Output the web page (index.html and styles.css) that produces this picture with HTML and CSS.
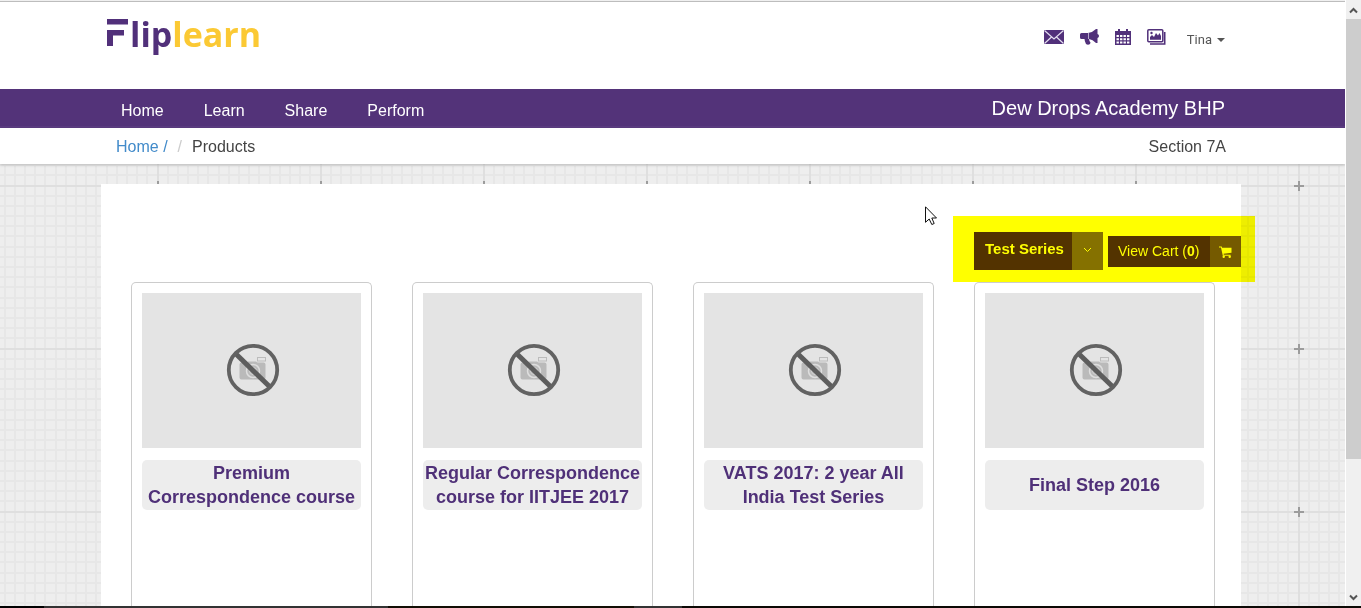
FILE: index.html
```html
<!DOCTYPE html>
<html lang="en">
<head>
<meta charset="utf-8">
<meta name="viewport" content="width=device-width, initial-scale=1">
<title>Fliplearn - Products</title>
<link rel="stylesheet" href="styles.css">
</head>
<body>
<svg class="defs" width="0" height="0" aria-hidden="true">
  <symbol id="no-photo" viewBox="0 0 54 54">
    <path fill="#bababa" d="M13.500 21.500q0-2 2-2h5l1.500-1h8l1.500 1h6q2 0 2 2v13q0 2-2 2h-22q-2 0-2-2z"/>
    <rect x="31.500" y="14.500" width="8" height="3.500" fill="none" stroke="#bcbcbc"/>
    <circle cx="27" cy="28" r="6.500" fill="#bababa" stroke="#dedede" stroke-width="1.500"/>
    <circle cx="27" cy="28" r="3.500" fill="none" stroke="#d2d2d2"/>
    <path d="M9.500 10.500 44 44" stroke="#5d5d5d" stroke-width="5"/>
    <circle cx="27" cy="27" r="24.200" fill="none" stroke="#626262" stroke-width="3.800"/>
  </symbol>
</svg>
<div class="window">
  <div class="page">
    <header class="header">
      <a class="logo" href="#" aria-label="Fliplearn">
        <svg class="logo-mark" viewBox="0 0 21 27" aria-hidden="true"><path fill="#51307a" d="M0 0h21v5.500H0zM0 11h17v5.500H6V27H0z"/></svg>
        <span class="logo-lip">lip</span><span class="logo-learn">learn</span>
      </a>
      <nav class="tools" aria-label="Account">
        <a href="#" aria-label="Messages"><svg width="20" height="18" viewBox="0 0 20 18"><path fill="#51307a" d="M0 2h20v14H0z"/><path d="M.5 2.500 10 11l9.500-8.500M.5 15.500 7.500 9M19.500 15.500 12.500 9" fill="none" stroke="#e4def0" stroke-width="1.200"/></svg></a>
        <a href="#" aria-label="Announcements"><svg width="19" height="18" viewBox="0 0 19 18"><path fill="#51307a" d="M0 6.500Q0 5 1.500 5H8q4.500-.5 8-4h1.500v5q1.500.3 1.500 2t-1.500 2v5H16q-3.300-3.500-7-4 .2 2 1.500 3.500L10 16q-2 1.300-4 0-1.500-3-1.500-5h-3Q0 11 0 9.500z"/><path d="M8.500 5v6" stroke="#b8a9cd"/></svg></a>
        <a href="#" aria-label="Calendar"><svg width="16" height="18" viewBox="0 0 16 18"><path fill="#51307a" d="M0 3h3V1h2v2h6V1h2v2h3v14H0z"/><g fill="#fff"><path d="M1.500 7h2.400v2H1.500zM5 7h2.400v2H5zM8.500 7h2.400v2H8.500zM12 7h2.400v2H12zM1.500 10.200h2.400v2H1.500zM5 10.200h2.400v2H5zM8.500 10.200h2.400v2H8.500zM12 10.200h2.400v2H12zM1.500 13.400h2.400v2H1.500zM5 13.400h2.400v2H5zM8.500 13.400h2.400v2H8.500zM12 13.400h2.400v2H12z"/></g></svg></a>
        <a href="#" aria-label="Gallery"><svg width="19" height="18" viewBox="0 0 19 18"><rect x=".8" y="1.800" width="15" height="12" rx="1" fill="#fff" stroke="#51307a" stroke-width="1.500"/><path fill="#51307a" d="M3 11.800V9l2-2 2 2 2-4 2 2.500L12.500 5 14 8v3.800z"/><circle cx="4.500" cy="5" r="1.200" fill="#51307a"/><path d="M17.700 4v12H3" fill="none" stroke="#51307a" stroke-width="1.600"/></svg></a>
        <button class="user" type="button">Tina<span class="caret"></span></button>
      </nav>
    </header>

    <div class="navbar">
      <nav class="menu" aria-label="Main">
        <a href="#">Home</a>
        <a href="#">Learn</a>
        <a href="#">Share</a>
        <a href="#">Perform</a>
      </nav>
      <span class="school">Dew Drops Academy BHP</span>
    </div>

    <div class="crumbs">
      <div class="trail"><a href="#">Home /</a><span class="slash">/</span><span>Products</span></div>
      <span>Section 7A</span>
    </div>

    <main class="workspace">
      <svg class="graph-paper" aria-hidden="true">
        <defs>
          <pattern id="graph" width="163" height="163" x="76" y="-60" patternUnits="userSpaceOnUse">
            <rect width="163" height="163" fill="#eeeeee"/>
            <path d="M10 0v163M20 0v163M31 0v163M41 0v163M51 0v163M61 0v163M71 0v163M92 0v163M102 0v163M112 0v163M122 0v163M132 0v163M143 0v163M153 0v163M163 0v163M0 0v163M0 0h163M0 10h163M0 20h163M0 31h163M0 41h163M0 51h163M0 61h163M0 71h163M0 92h163M0 102h163M0 112h163M0 122h163M0 132h163M0 143h163M0 153h163M0 163h163" stroke="#e7e7e7" stroke-width="2"/>
            <path d="M82 0v163M0 82h163" stroke="#dfdfdf" stroke-width="2"/>
            <path d="M82 77v10M77 82h10" stroke="#9c9c9c" stroke-width="2"/>
          </pattern>
        </defs>
        <rect width="100%" height="100%" fill="url(#graph)"/>
      </svg>
      <section class="panel">
        <div class="toolbar">
          <label class="filter">
            <select aria-label="Category"><option>Test Series</option></select>
            <span class="filter-arrow"><svg width="9" height="6" viewBox="0 0 9 6" aria-hidden="true"><path d="m1 1 3.500 3.500L8 1" fill="none" stroke="#fff"/></svg></span>
          </label>
          <button class="cart" type="button">
            <span class="cart-text">View Cart (<b>0</b>)</span>
            <span class="cart-icon"><svg width="13" height="12" viewBox="0 0 13 12" aria-hidden="true"><path fill="#fff" d="M0 .5h2.700l.4 1.300H12.500v5L4.600 7.800l.2.900h6.800v1H3.800L2 1.500H0z"/><circle cx="4.700" cy="10.700" r="1.200" fill="#fff"/><circle cx="10.700" cy="10.700" r="1.200" fill="#fff"/></svg></span>
          </button>
          <div class="highlight"></div>
        </div>
        <div class="products">
          <article class="card"><div class="photo"><svg><use href="#no-photo"/></svg></div><h2>Premium Correspondence course</h2></article>
          <article class="card"><div class="photo"><svg><use href="#no-photo"/></svg></div><h2>Regular Correspondence course for IITJEE 2017</h2></article>
          <article class="card"><div class="photo"><svg><use href="#no-photo"/></svg></div><h2>VATS 2017: 2 year All India Test Series</h2></article>
          <article class="card"><div class="photo"><svg><use href="#no-photo"/></svg></div><h2>Final Step 2016</h2></article>
        </div>
      </section>
    </main>
  </div>

  <div class="scrollbar" aria-hidden="true">
    <svg viewBox="0 0 15 17"><path d="M4 10.500 7.500 7l3.500 3.500" fill="none" stroke="#555" stroke-width="2"/></svg>
    <div class="thumb"></div>
    <div class="track"></div>
    <svg viewBox="0 0 15 17"><path d="M4 6.500 7.500 10 11 6.500" fill="none" stroke="#555" stroke-width="2"/></svg>
  </div>
  <div class="screen-edge"></div>
  <svg class="pointer" viewBox="0 0 12 20" aria-hidden="true"><path d="M.5.800v15.500L4.200 13l2.600 5.500 2.400-1L6.800 12h4.700z" fill="#fff" stroke="#111"/></svg>
</div>
</body>
</html>
```

FILE: styles.css
```css
* {
  box-sizing: border-box;
}

body {
  margin: 0;
  background: #fff;
  color: #444;
  font-family: "Liberation Sans", Arial, sans-serif;
  font-size: 16px;
}

a {
  color: inherit;
  text-decoration: none;
}

button,
select {
  margin: 0;
  padding: 0;
  border: 0;
  border-radius: 0;
  background: none;
  color: inherit;
  font: inherit;
}

.defs {
  position: absolute;
}

.window {
  position: relative;
  display: grid;
  grid-template-columns: minmax(0, 1fr) 16px;
  grid-template-rows: minmax(0, 1fr) 2px;
  height: 100vh;
  overflow: hidden;
}

.page {
  display: flex;
  flex-direction: column;
  overflow: hidden;
  border-top: 1px solid #f0f0f0;
}

.header {
  display: flex;
  flex: none;
  justify-content: space-between;
  align-items: flex-start;
  height: 88px;
  padding: 0 120px 0 107px;
  border-top: 1px solid #bdbdbd;
}

.logo {
  display: flex;
  align-items: flex-start;
  padding-top: 8px;
  font-family: "Open Sans", "Noto Sans", sans-serif;
  font-size: 34px;
  font-weight: 700;
  line-height: 48px;
}

.logo-mark {
  width: 21px;
  height: 27px;
  margin: 9px 2px 0 0;
}

.logo-lip {
  color: #51307a;
}

.logo-learn {
  color: #fbc934;
}

.tools {
  display: flex;
  align-items: center;
  gap: 16px;
  padding-top: 24px;
}

.tools svg {
  display: block;
}

.user {
  display: flex;
  align-items: center;
  gap: 5px;
  margin-left: 5px;
  padding-top: 6px;
  color: #555;
  font-family: Roboto, sans-serif;
  font-size: 13px;
  line-height: 16px;
}

.caret {
  border: 4px solid transparent;
  border-top-color: #555;
  border-bottom: 0;
}

.navbar {
  display: flex;
  flex: none;
  justify-content: space-between;
  height: 39px;
  padding: 0 120px 0 121px;
  border-bottom: 2px solid #5b3c82;
  background: #533379;
  color: #fff;
}

.menu {
  display: flex;
  gap: 40px;
  line-height: 43px;
}

.school {
  font-size: 20px;
  line-height: 38px;
}

.crumbs {
  position: relative;
  z-index: 1;
  display: flex;
  flex: none;
  justify-content: space-between;
  height: 36px;
  padding: 0 119px 0 116px;
  background: #fff;
  box-shadow: 0 1px 3px rgba(0, 0, 0, 0.2);
  line-height: 38px;
}

.trail {
  display: flex;
  gap: 10px;
}

.trail a {
  color: #428bca;
}

.slash {
  color: #ccc;
}

.workspace {
  position: relative;
  display: flex;
  flex: 1;
  padding: 20px 104px 0 101px;
}

.graph-paper {
  position: absolute;
  inset: 0;
  width: 100%;
  height: 100%;
}

.panel {
  position: relative;
  display: flex;
  flex: 1;
  flex-direction: column;
  gap: 12px;
  padding-top: 48px;
  background: #fff;
}

.toolbar {
  position: relative;
  display: flex;
  align-self: flex-end;
  align-items: flex-start;
  gap: 5px;
  color: #fff;
  font-size: 14px;
}

.filter {
  display: flex;
  height: 38px;
  background: #533379;
}

.filter select {
  width: 98px;
  padding: 0 0 6px 11px;
  appearance: none;
  font-size: 15px;
  font-weight: 700;
}

.filter option {
  color: #444;
}

.filter-arrow,
.cart-icon {
  display: flex;
  align-items: center;
  justify-content: center;
  width: 31px;
}

.filter-arrow {
  padding-bottom: 3px;
  background: #857199;
}

.cart {
  display: flex;
  height: 31px;
  margin-top: 4px;
  background: #533379;
  line-height: 31px;
}

.cart-text {
  width: 102px;
  padding-left: 10px;
  text-align: left;
}

.cart-icon {
  height: 31px;
  background: #755a8c;
}

/* Marker stroke laid over the toolbar */
.highlight {
  position: absolute;
  inset: -16px -14px -12px -21px;
  background: #ff0;
  mix-blend-mode: multiply;
  pointer-events: none;
}

.products {
  display: grid;
  flex: 1;
  grid-template-columns: repeat(4, minmax(0, 1fr));
  gap: 40px;
  padding: 0 26px 0 30px;
}

.card {
  padding: 10px;
  border: 1px solid #ccc;
  border-bottom: 0;
  border-radius: 5px 5px 0 0;
}

.photo {
  display: flex;
  align-items: center;
  justify-content: center;
  height: 155px;
  padding: 0 0 2px 3px;
  background: #e4e4e4;
}

.photo svg {
  width: 54px;
  height: 54px;
}

.card h2 {
  display: flex;
  align-items: center;
  justify-content: center;
  min-height: 50px;
  margin: 12px 0 0;
  border-radius: 5px;
  background: #ededed;
  color: #4f3078;
  font-size: 18px;
  line-height: 24px;
  text-align: center;
}

.scrollbar {
  display: flex;
  flex-direction: column;
  border-left: 1px solid #fff;
  background: #f0f0f0;
  padding-top: 2px;
}

.scrollbar svg {
  flex: none;
  width: 15px;
  height: 17px;
}

.thumb {
  flex: 440;
  background: #cdcdcd;
}

.track {
  flex: 130;
}

.screen-edge {
  grid-column: 1 / -1;
  background: linear-gradient(90deg, #000 44px, #333 44px 388px, #120e04 388px 634px, #333 634px 682px, #0c0905 682px);
}

.pointer {
  position: absolute;
  top: 206px;
  left: 925px;
  width: 12px;
  height: 20px;
}
```
